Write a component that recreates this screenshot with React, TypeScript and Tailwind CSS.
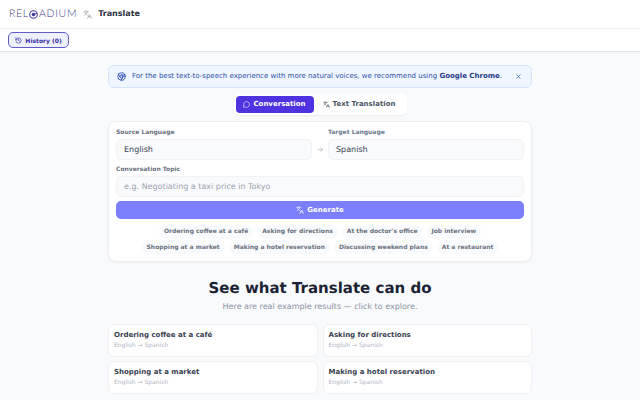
import React from 'react';
import { History, Languages, MessageCircle, X, ArrowRight, Chrome } from 'lucide-react';

const topics = [
  ['Ordering coffee at a café', 'Asking for directions', "At the doctor's office", 'Job interview'],
  ['Shopping at a market', 'Making a hotel reservation', 'Discussing weekend plans', 'At a restaurant'],
];

const examples = ['Ordering coffee at a café', 'Asking for directions', 'Shopping at a market', 'Making a hotel reservation'];

const Logo = () => (
  <div className="flex items-center text-[#3f3990] text-[10.5px] tracking-[0.7px] font-['Lato',sans-serif] font-light leading-none">
    <span>REL</span>
    <svg width="9" height="9" viewBox="0 0 11 11" fill="none" stroke="#4338a5" className="mr-[1px]">
      <circle cx="5.5" cy="5.5" r="4.6" strokeWidth="1.3" />
      <circle cx="5.5" cy="5.5" r="2.2" fill="#4338a5" stroke="none" />
      <path d="M5.5 5.5 L10 4" strokeWidth="1.1" />
    </svg>
    <span>ADIUM</span>
  </div>
);

export default function App() {
  return (
    <div className="h-[400px] overflow-hidden bg-[#f8fafc] font-['DejaVu_Sans',sans-serif] text-[#1a2233] [text-rendering:geometricPrecision]">
      <header className="h-[29px] bg-white border-b border-[#eceef2] flex items-center pl-[9px]">
        <Logo />
        <Languages className="w-[9px] h-[9px] ml-[6px] text-[#8a8f99]" strokeWidth={1.6} />
        <span className="ml-[6px] text-[8px] font-bold text-[#2b3040]">Translate</span>
      </header>
      <div className="h-[23px] bg-white border-b border-[#e2e5ea] shadow-[0_1px_2px_rgba(0,0,0,0.04)] flex items-center pl-[8px]">
        <button className="h-[16px] w-[61px] rounded-[5px] border border-[#5f5bc8] bg-[#eef0fe] flex items-center justify-center gap-[3px] text-[#3a2fa0] text-[6px] font-bold">
          <History className="w-[7px] h-[7px]" strokeWidth={2.2} />
          History (0)
        </button>
      </div>
      <main className="w-[424px] mx-auto pt-[13px]">
        <div className="h-[23px] rounded-[6px] border border-[#d5e5fb] bg-[#eff6ff] flex items-center pl-[8px] pr-[9px] text-[7px] text-[#2d4fa8]">
          <Chrome className="w-[9px] h-[9px] text-[#1e40af]" strokeWidth={2.2} />
          <span className="ml-[6px] flex-1 whitespace-nowrap">
            For the best text-to-speech experience with more natural voices, we recommend using <b className="text-[#1e3a8a]">Google Chrome</b>.
          </span>
          <X className="w-[7px] h-[7px] text-[#1e40af]" strokeWidth={2} />
        </div>
        <div className="flex justify-center mt-[6px]">
          <div className="h-[21px] bg-white rounded-[5px] shadow-[0_1px_2px_rgba(0,0,0,0.06)] flex items-center p-[2px]">
            <button className="h-[17px] w-[78px] rounded-[4px] bg-[#4f33e0] text-white text-[7px] font-bold flex items-center justify-center gap-[3px]">
              <MessageCircle className="w-[7px] h-[7px]" strokeWidth={2} />
              Conversation
            </button>
            <button className="h-[17px] w-[91px] text-[#4b5563] text-[7px] font-bold flex items-center justify-center gap-[3px]">
              <Languages className="w-[7px] h-[7px]" strokeWidth={2} />
              Text Translation
            </button>
          </div>
        </div>
        <section className="mt-[6px] h-[141px] bg-white rounded-[8px] border border-[#eceff3] shadow-[0_1px_3px_rgba(0,0,0,0.05)] px-[7px] pt-[7px]">
          <div className="flex items-end">
            <div className="w-[196px]">
              <label className="block text-[6px] font-bold text-[#6b7280] leading-[8px] mb-[2px]">Source Language</label>
              <div className="h-[21px] rounded-[5px] border border-[#f0f2f5] bg-[#f8fafc] flex items-center px-[7px] text-[8px] text-[#374151]">English</div>
            </div>
            <div className="w-[16px] h-[21px] flex items-center justify-center text-[#a9afb9]">
              <ArrowRight className="w-[7px] h-[7px]" strokeWidth={2} />
            </div>
            <div className="w-[196px]">
              <label className="block text-[6px] font-bold text-[#6b7a90] leading-[8px] mb-[2px]">Target Language</label>
              <div className="h-[21px] rounded-[5px] border border-[#f0f2f5] bg-[#f8fafc] flex items-center px-[7px] text-[8px] text-[#374151]">Spanish</div>
            </div>
          </div>
          <label className="block mt-[6px] text-[6px] font-bold text-[#6b7280] leading-[8px] mb-[2px]">Conversation Topic</label>
          <div className="h-[21px] rounded-[5px] border border-[#f0f2f5] bg-[#f8fafc] flex items-center px-[7px] text-[8px] text-[#9ca3af]">e.g. Negotiating a taxi price in Tokyo</div>
          <button className="mt-[4px] w-full h-[18px] rounded-[5px] bg-[#7c7ffc] text-white text-[7px] font-bold flex items-center justify-center gap-[3px]">
            <Languages className="w-[8px] h-[8px]" strokeWidth={2} />
            Generate
          </button>
          <div className="mt-[5.5px] flex flex-col gap-[1.5px]">
            {topics.map((row, i) => (
              <div key={i} className="flex justify-center gap-[4px]">
                {row.map(t => (
                  <span key={t} className="h-[14px] px-[5px] rounded-full bg-[#f8fafc] text-[6px] font-bold text-[#6b7280] flex items-center">{t}</span>
                ))}
              </div>
            ))}
          </div>
        </section>
        <h2 className="mt-[16px] text-center text-[15px] leading-[20px] font-bold text-[#1a2233]">See what Translate can do</h2>
        <p className="mt-[3px] text-center text-[8px] leading-[12px] text-[#8b92a0]">Here are real example results — click to explore.</p>
        <div className="mt-[11px] grid grid-cols-2 gap-x-[5px] gap-y-[4.5px]">
          {examples.map(e => (
            <div key={e} className="h-[32.5px] bg-white rounded-[6px] border border-[#eef0f3] px-[5px] pt-[4.5px]">
              <div className="text-[7px] font-bold text-[#374151] leading-[10px]">{e}</div>
              <div className="mt-[1px] text-[6px] text-[#b0b5bf] leading-[9px]">English → Spanish</div>
            </div>
          ))}
        </div>
      </main>
    </div>
  );
}
